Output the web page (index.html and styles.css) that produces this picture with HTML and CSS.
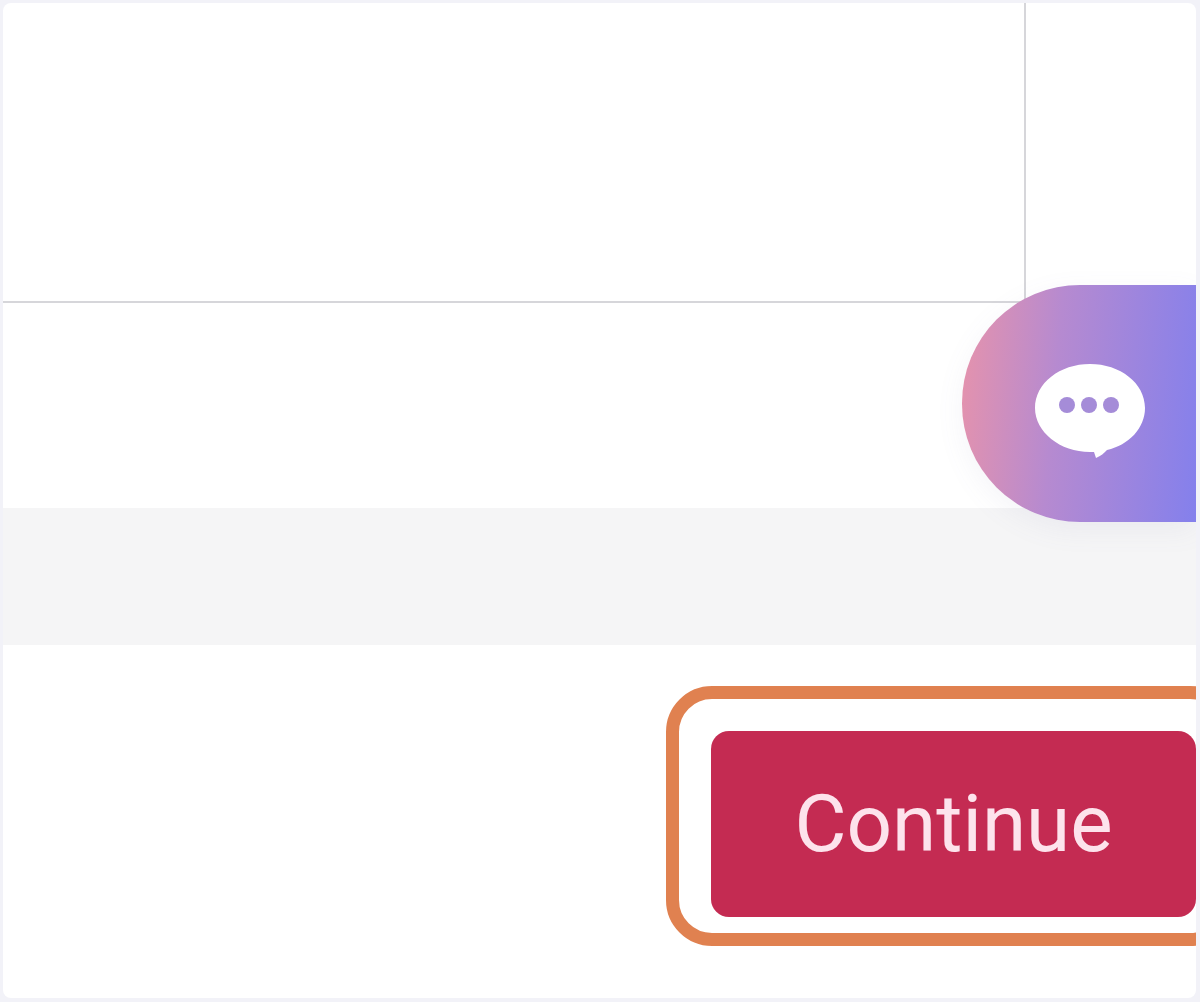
FILE: index.html
```html
<!DOCTYPE html>
<html lang="en">
<head>
  <meta charset="UTF-8">
  <meta name="viewport" content="width=device-width, initial-scale=1.0">
  <title>Continue</title>
  <link rel="stylesheet" href="styles.css">
</head>
<body>

<div class="card">
  <div class="top">
    <div class="panel"></div>
    <button class="chat" aria-label="Chat">
      <svg class="chat-icon" viewBox="0 0 112 96">
        <path fill="#fff" d="M56 1C26 1 1 20 1 45c0 24 25 44 55 44h4l2 6c5-2 8-5 11-8 22-5 38-22 38-42C111 20 86 1 56 1z"/>
        <circle cx="33" cy="42" r="8" fill="#a58cd8"/>
        <circle cx="55" cy="42" r="8" fill="#a58cd8"/>
        <circle cx="77" cy="42" r="8" fill="#a58cd8"/>
      </svg>
    </button>
  </div>
  <div class="band"></div>
  <div class="footer">
    <div class="highlight">
      <button class="continue">Continue</button>
    </div>
  </div>
</div>

</body>
</html>
```

FILE: styles.css
```css
* {
  box-sizing: border-box;
}

html, body {
  height: 100%;
}

body {
  margin: 0;
  padding: 3px 4px 4px 3px;
  background: #f2f2f8;
  font-family: Roboto, "Liberation Sans", sans-serif;
}

.card {
  height: 995px;
  background: #fff;
  border-radius: 8px;
  overflow: hidden;
}

.top {
  position: relative;
  height: 505px;
}

.panel {
  width: 1023px;
  height: 300px;
  border-right: 2px solid #d6d6da;
  border-bottom: 2px solid #d6d6da;
}

.chat {
  position: absolute;
  top: 282px;
  right: 0;
  z-index: 1;
  display: flex;
  align-items: center;
  width: 234px;
  height: 237px;
  padding: 0 0 0 72px;
  border: 0;
  border-radius: 118px 0 0 118px;
  background: linear-gradient(95deg, #e793ab 0%, #b68ad0 40%, #8480ec 100%);
  box-shadow: 0 8px 28px rgba(120, 110, 160, 0.08);
}

.chat-icon {
  display: block;
  width: 112px;
  height: 96px;
  margin-top: 14px;
}

.band {
  height: 137px;
  background: #f5f5f6;
}

.footer {
  display: flex;
  justify-content: flex-end;
  padding-top: 41px;
}

.highlight {
  margin-right: -40px;
  padding: 32px 27px 16px 32px;
  border: 13px solid #e08150;
  border-radius: 46px;
}

.continue {
  display: block;
  width: 485px;
  height: 186px;
  border: 0;
  border-radius: 18px;
  background: #c42b52;
  color: #fde3ec;
  font-family: inherit;
  font-size: 80px;
}
```
